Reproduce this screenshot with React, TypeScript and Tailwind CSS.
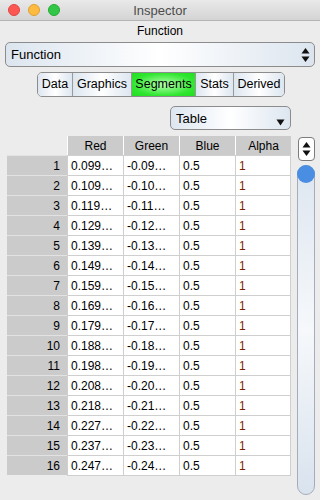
import React from 'react';

const reds = ['0.099…', '0.109…', '0.119…', '0.129…', '0.139…', '0.149…', '0.159…', '0.169…', '0.179…', '0.188…', '0.198…', '0.208…', '0.218…', '0.227…', '0.237…', '0.247…'];
const greens = ['-0.09…', '-0.10…', '-0.11…', '-0.12…', '-0.13…', '-0.14…', '-0.15…', '-0.16…', '-0.17…', '-0.18…', '-0.19…', '-0.20…', '-0.21…', '-0.22…', '-0.23…', '-0.24…'];

const tabs = [
    { label: 'Data', w: 'w-[34px]' },
    { label: 'Graphics', w: 'w-[59px]' },
    { label: 'Segments', w: 'w-[64px]' },
    { label: 'Stats', w: 'w-[38px]' },
    { label: 'Derived', w: 'w-[51px]' },
];

const UpDown = ({ className }: { className?: string }) => (
    <svg width="9" height="16" viewBox="0 0 9 16" className={className}>
        <path d="M4.5 1 L8.5 6.5 L0.5 6.5 Z" fill="#111" />
        <path d="M4.5 15 L8.5 9.5 L0.5 9.5 Z" fill="#111" />
    </svg>
);

export default function App() {
    return (
        <div className="w-[320px] h-[500px] bg-[#ececec] flex flex-col overflow-hidden text-black" style={{ fontFamily: '"Liberation Sans", Arial, sans-serif' }}>
            {/* Title bar */}
            <div className="h-[21px] shrink-0 relative flex items-center justify-center bg-gradient-to-b from-[#e9e9e9] to-[#d4d4d4] border-b border-[#b4b4b4]">
                <div className="absolute left-[8px] top-[4px] flex gap-[8px]">
                    <span className="w-[12px] h-[12px] rounded-full bg-[#fc5753] border border-[#df4744]" />
                    <span className="w-[12px] h-[12px] rounded-full bg-[#fdbc40] border border-[#de9f34]" />
                    <span className="w-[12px] h-[12px] rounded-full bg-[#33c748] border border-[#27aa35]" />
                </div>
                <span className="text-[13px] text-[#4c4c4c] leading-none">Inspector</span>
            </div>

            {/* Function label */}
            <div className="h-[17px] flex items-center justify-center text-[12px] leading-none mt-[1px]">Function</div>

            {/* Function popup */}
            <div className="mx-[5px] mt-[3px] h-[25px] rounded-[5px] border border-[#8c8c8c] bg-gradient-to-r from-[#dce5ef] via-white to-[#dce5ef] flex items-center justify-between pl-[5px] pr-[4px]">
                <span className="text-[13px] leading-none">Function</span>
                <UpDown />
            </div>

            {/* Tabs */}
            <div className="flex mt-[5px] pl-[37px]">
                <div className="flex h-[25px] rounded-[5px] border border-[#8c8c8c] overflow-hidden">
                    {tabs.map((t, i) => (
                        <div
                            key={t.label}
                            className={`${t.w} flex items-center justify-center text-[12.5px] leading-none ${i > 0 ? 'border-l border-[#9a9a9a]' : ''} ${t.label === 'Segments' ? 'bg-[radial-gradient(ellipse_at_center,#b6ffb0_0%,#2ee62e_70%,#22dd22_100%)]' : 'bg-gradient-to-r from-[#dde6f0] via-white to-[#dde6f0]'}`}
                        >
                            {t.label}
                        </div>
                    ))}
                </div>
            </div>

            {/* Table popup */}
            <div className="flex justify-end pr-[29px] mt-[9px]">
                <div className="w-[121px] h-[24px] rounded-[5px] border border-[#8c8c8c] bg-gradient-to-r from-[#dde6f0] via-white to-[#dde6f0] flex items-center justify-between pl-[5px] pr-[5px]">
                    <span className="text-[13px] leading-none">Table</span>
                    <svg width="9" height="7" viewBox="0 0 9 7" className="mt-[8px]">
                        <path d="M0.5 0.5 L8.5 0.5 L4.5 6.5 Z" fill="#111" />
                    </svg>
                </div>
            </div>

            {/* Table + scroller */}
            <div className="flex mt-[6px] pl-[7px]">
                <div className="w-[285px] shrink-0">
                    <div className="grid grid-cols-[60px_56px_56px_56px_56px] h-[19px] text-[12px]">
                        <div />
                        {['Red', 'Green', 'Blue', 'Alpha'].map((h) => (
                            <div key={h} className="bg-[#cbcbcb] border-l border-white flex items-center justify-center leading-none">{h}</div>
                        ))}
                    </div>
                    {reds.map((r, i) => (
                        <div key={i} className="grid grid-cols-[60px_56px_56px_56px_56px] h-[20px] text-[12px] leading-none">
                            <div className="bg-[#cbcbcb] border-t border-[#e2e2e2] flex items-center justify-end pr-[7px]">{i + 1}</div>
                            <div className="bg-white border-t border-l border-[#cfcfcf] flex items-center pl-[3px]">{r}</div>
                            <div className="bg-white border-t border-l border-[#cfcfcf] flex items-center pl-[3px]">{greens[i]}</div>
                            <div className="bg-white border-t border-l border-[#cfcfcf] flex items-center pl-[3px]">0.5</div>
                            <div className="bg-white border-t border-l border-r border-[#cfcfcf] flex items-center pl-[3px] text-[#7b2300]">1</div>
                        </div>
                    ))}
                    <div className="grid grid-cols-[60px_56px_56px_56px_56px]">
                        <div />
                        <div className="col-span-4 border-t border-[#cfcfcf]" />
                    </div>
                </div>

                <div className="flex flex-col items-center ml-[5px] w-[18px]">
                    <div className="w-[17px] h-[24px] rounded-[4px] border border-[#7c7c7c] bg-white flex items-center justify-center mt-[1px]">
                        <UpDown />
                    </div>
                    <div className="relative mt-[4px] w-[18px] h-[330px] rounded-full border border-[#a5adba] bg-gradient-to-b from-[#dde6f0] via-[#f6f8fb] to-[#d9e3ee]">
                        <div className="absolute -left-[1px] -top-[1px] w-[18px] h-[18px] rounded-full bg-[#4a8ee4]" />
                    </div>
                </div>
            </div>
        </div>
    );
}
